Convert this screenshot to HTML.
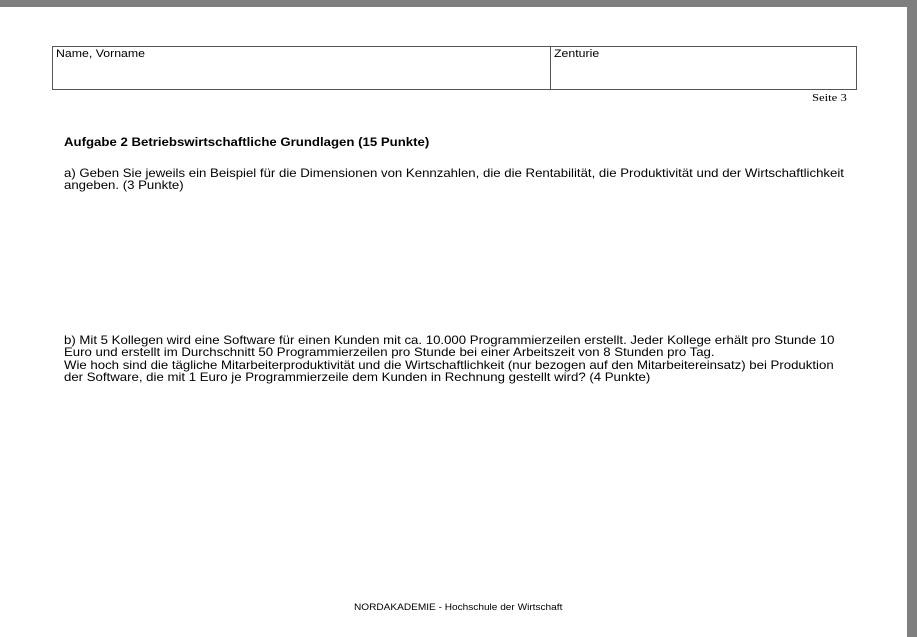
<!DOCTYPE html>
<html><head><meta charset="utf-8"><style>
body{margin:0;width:917px;height:637px;background:#7f7f7f;position:relative;overflow:hidden;font-family:"Liberation Sans",Arial,sans-serif;color:#000}
.page{position:absolute;left:0;top:7px;width:907px;height:630px;background:#fff}
.t{position:absolute;white-space:nowrap;font-size:12px;line-height:12.3px;transform:scaleX(1.1);transform-origin:0 0}
.box{position:absolute;left:52px;top:46px;width:803px;height:42px;border:1px solid #555}
.div{position:absolute;left:550px;top:46px;width:1px;height:43px;background:#555}
</style></head><body>
<div class="page"></div>
<div class="box"></div><div class="div"></div>
<div class="t" style="left:56px;top:48px;font-size:11px;transform:scaleX(1.12)">Name, Vorname</div>
<div class="t" style="left:554px;top:48px;font-size:11px;transform:scaleX(1.12)">Zenturie</div>
<div class="t" style="left:812px;top:92px;font-family:'Liberation Serif',serif;font-size:11px;transform:scaleX(1.15)">Seite 3</div>
<div class="t" style="left:64px;top:136px;font-weight:bold">Aufgabe 2 Betriebswirtschaftliche Grundlagen (15 Punkte)</div>
<div class="t" style="left:64px;top:167px">a) Geben Sie jeweils ein Beispiel für die Dimensionen von Kennzahlen, die die Rentabilität, die Produktivität und der Wirtschaftlichkeit<br>angeben. (3 Punkte)</div>
<div class="t" style="left:64px;top:334px">b) Mit 5 Kollegen wird eine Software für einen Kunden mit ca. 10.000 Programmierzeilen erstellt. Jeder Kollege erhält pro Stunde 10<br>Euro und erstellt im Durchschnitt 50 Programmierzeilen pro Stunde bei einer Arbeitszeit von 8 Stunden pro Tag.<br>Wie hoch sind die tägliche Mitarbeiterproduktivität und die Wirtschaftlichkeit (nur bezogen auf den Mitarbeitereinsatz) bei Produktion<br>der Software, die mit 1 Euro je Programmierzeile dem Kunden in Rechnung gestellt wird? (4 Punkte)</div>
<div class="t" style="left:354px;top:601px;font-size:9px;transform:scaleX(1.12)">NORDAKADEMIE - Hochschule der Wirtschaft</div>
</body></html>
